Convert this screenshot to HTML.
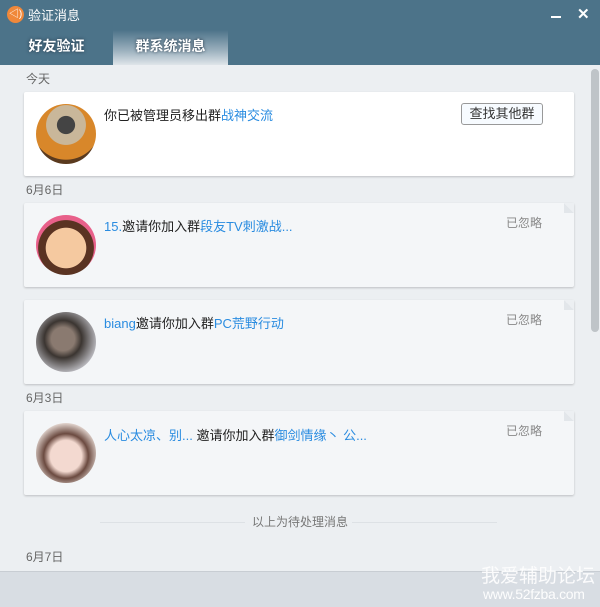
<!DOCTYPE html><html><head><meta charset="utf-8"><style>
*{margin:0;padding:0;box-sizing:border-box}
body{width:600px;height:607px;overflow:hidden;background:#eceff2;font-family:"Liberation Sans","Noto Sans CJK SC",sans-serif;font-size:13px;color:#222;position:relative}
.top{position:absolute;left:0;top:0;width:600px;height:65px;background:#4c7389}
.title{position:absolute;left:28px;top:5px;color:#fff;font-size:13px}
.logo{position:absolute;left:7px;top:6px;width:17px;height:17px;border-radius:50%;background:#f0883a;color:#fff;font-size:10px;text-align:center;line-height:17px}
.tab{position:absolute;top:30px;height:35px;line-height:33px;color:#fff;font-weight:bold;font-size:14px;text-align:center;text-shadow:0 0 3px #234}
.tab.a{background:linear-gradient(#4c7389,#9db2bf 60%,#dfe5ea)}
.date{position:absolute;left:26px;color:#666;font-size:12px}
.card{position:absolute;left:24px;width:550px;height:84px;background:#f4f6f8;border-radius:2px;box-shadow:0 1px 2px rgba(0,0,0,.2)}
.card.w{background:#fff}
.av{position:absolute;left:12px;top:12px;width:60px;height:60px;border-radius:50%}
.txt{position:absolute;left:80px;top:13px;font-size:13px}
.b{color:#2a8ce0}
.ign{position:absolute;right:32px;top:11px;color:#888;font-size:12px}
.fold{position:absolute;right:0;top:0;width:10px;height:10px;background:linear-gradient(45deg,#e2e6ea 50%,#eceff2 50%)}
.btn{position:absolute;left:437px;top:11px;width:82px;height:22px;border:1px solid #999;border-radius:3px;background:#f7fbff;text-align:center;line-height:20px;font-size:13px;color:#333}
.sb{position:absolute;left:591px;top:69px;width:8px;height:263px;background:#bfc4c8;border-radius:4px}
.foot{position:absolute;left:0;top:571px;width:600px;height:36px;background:#d8dde3;border-top:1px solid #c8cdd3}
</style></head><body>
<div class="top"></div>
<div class="logo">◁)</div>
<div class="title">验证消息</div>
<div style="position:absolute;left:551px;top:16px;width:10px;height:2px;background:#fff"></div>
<div style="position:absolute;left:577px;top:5px;color:#fff;font-size:15px;font-weight:bold">✕</div>
<div class="tab" style="left:0;width:113px">好友验证</div>
<div class="tab a" style="left:113px;width:115px">群系统消息</div>
<div class="date" style="top:70px">今天</div>
<div class="card w" style="top:92px"><div class="av" style="background:radial-gradient(circle at 50% 35%,#444 0 18%,#c9b79a 19% 40%,#d8872a 41% 70%,#5a3a1e 71%)"></div><div class="txt">你已被管理员移出群<span class="b">战神交流</span></div><div class="btn">查找其他群</div></div>
<div class="date" style="top:181px">6月6日</div>
<div class="card" style="top:203px"><div class="fold"></div><div class="av" style="background:radial-gradient(circle at 50% 55%,#f5c9a0 0 45%,#5a3322 46% 62%,#e8608a 63%)"></div><div class="txt"><span class="b">15.</span>邀请你加入群<span class="b">段友TV刺激战...</span></div><div class="ign">已忽略</div></div>
<div class="card" style="top:300px"><div class="fold"></div><div class="av" style="background:radial-gradient(circle at 45% 45%,#8a7a70 0 25%,#3b3531 40%,#c0c0c6 75%)"></div><div class="txt"><span class="b">biang</span>邀请你加入群<span class="b">PC荒野行动</span></div><div class="ign">已忽略</div></div>
<div class="date" style="top:389px">6月3日</div>
<div class="card" style="top:411px"><div class="fold"></div><div class="av" style="background:radial-gradient(circle at 50% 55%,#f3d9d0 0 35%,#6b4a40 50%,#e8dcd6 75%)"></div><div class="txt" style="top:14px"><span class="b">人心太凉、别...</span> 邀请你加入群<span class="b">御剑情缘丶 公...</span></div><div class="ign">已忽略</div></div>
<div style="position:absolute;left:100px;top:522px;width:145px;height:1px;background:#dde1e5"></div>
<div style="position:absolute;left:352px;top:522px;width:145px;height:1px;background:#dde1e5"></div>
<div style="position:absolute;left:252px;top:513px;color:#777;font-size:12px">以上为待处理消息</div>
<div class="date" style="top:548px">6月7日</div>
<div class="sb"></div>
<div class="foot"></div>
<div style="position:absolute;left:481px;top:561px;color:#fff;font-size:19px;opacity:.9">我爱辅助论坛</div>
<div style="position:absolute;left:483px;top:586px;color:#fff;font-size:14px;opacity:.95;letter-spacing:-0.3px">www.52fzba.com</div>
</body></html>
